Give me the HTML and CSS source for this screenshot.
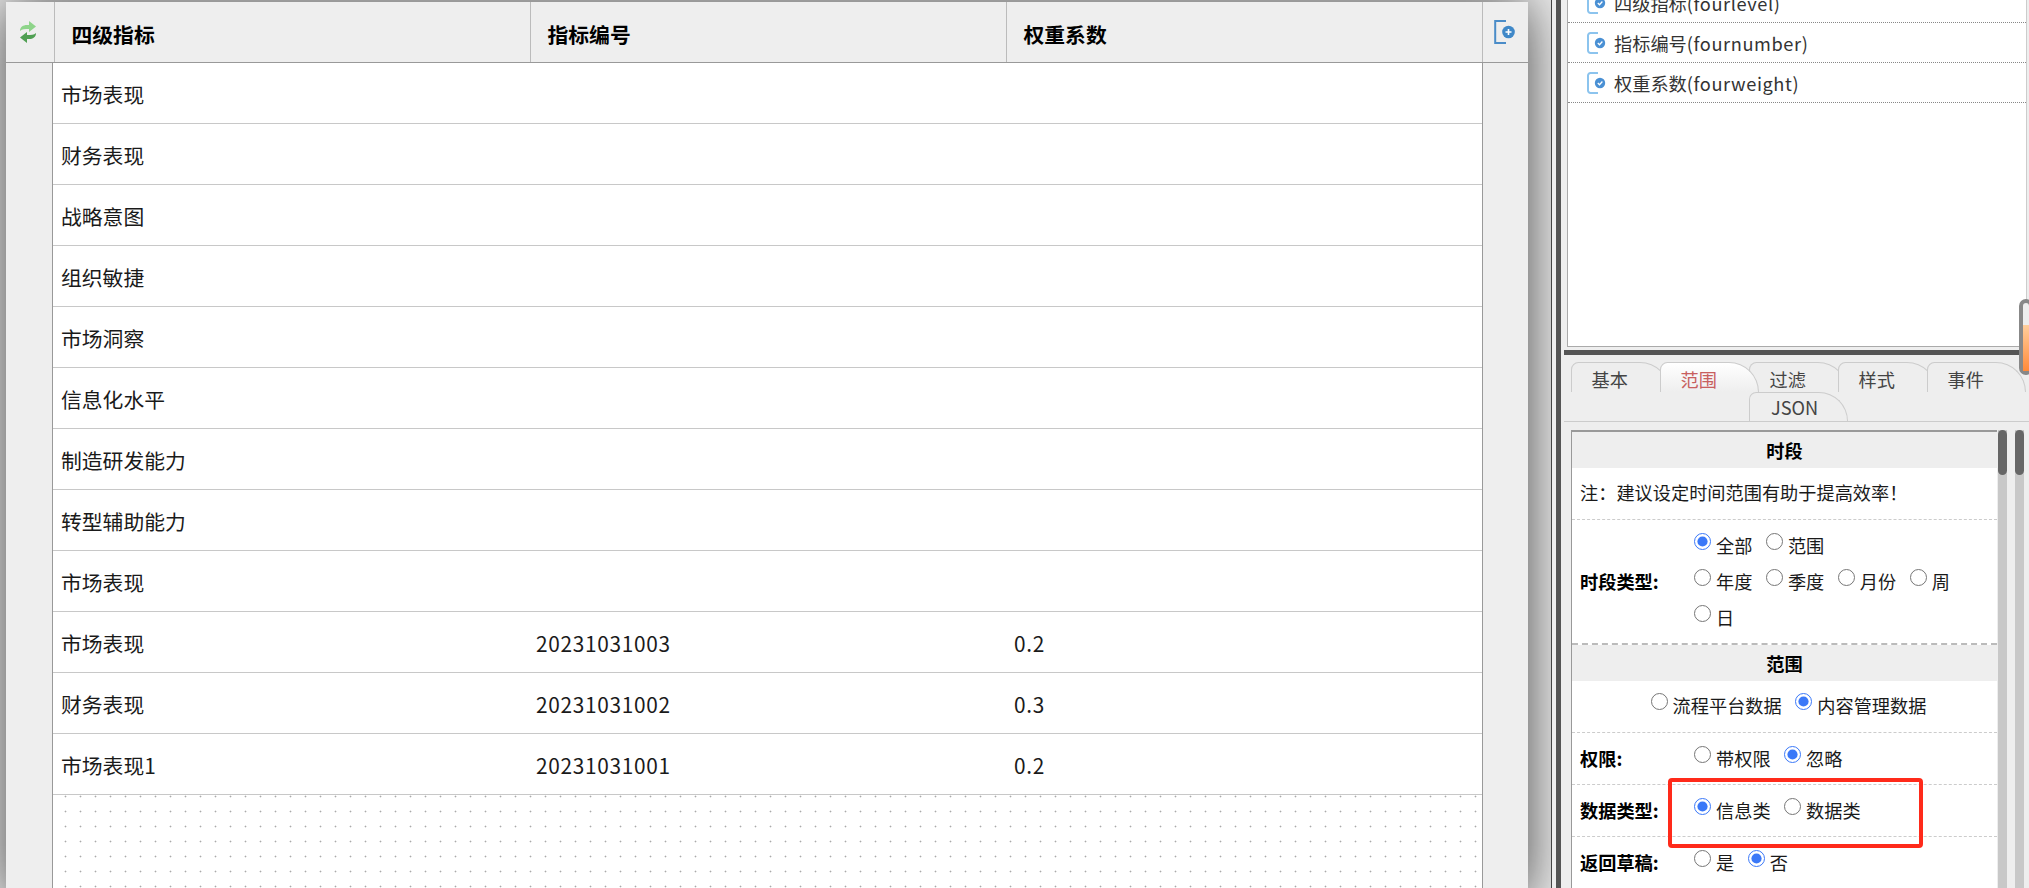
FILE: index.html
```html
<!DOCTYPE html>
<html lang="zh-CN">
<head>
<meta charset="utf-8">
<title>四级指标</title>
<link rel="stylesheet" href="styles.css">
</head>
<body>
<div class="page">
  <section class="stage">
    <div class="sheet">
      <div class="sheet-head">
        <div class="hcell">
          <svg class="ico-refresh" viewBox="0 0 18 22" width="18" height="22"><path d="M1 10C1 6 4 4 8 4h2V0l7 5.500-7 5.500V8C6 8 3 8 1 10Z" fill="#8ed48a"/><path d="M17 12c0 4-3 6-7 6H8v4l-7-5.500L8 11v3c4 0 7 0 9-2Z" fill="#4f9f52"/></svg>
        </div>
        <div class="hcell htext">四级指标</div>
        <div class="hcell htext">指标编号</div>
        <div class="hcell htext">权重系数</div>
        <div class="hcell hlast">
          <svg class="ico-add" viewBox="0 0 21 24" width="21" height="24"><path d="M12 1H1.200V23H12" fill="none" stroke="#4a8cc8" stroke-width="2"/><circle cx="14.500" cy="12" r="6.300" fill="#3f88c8"/><path d="M11.500 12h6M14.500 9v6" stroke="#fff" stroke-width="1.600"/></svg>
        </div>
      </div>
      <div class="sheet-body">
        <div class="gutter gutter-l"></div>
        <div class="rows">
          <div class="row"><span>市场表现</span><span></span><span></span></div>
          <div class="row"><span>财务表现</span><span></span><span></span></div>
          <div class="row"><span>战略意图</span><span></span><span></span></div>
          <div class="row"><span>组织敏捷</span><span></span><span></span></div>
          <div class="row"><span>市场洞察</span><span></span><span></span></div>
          <div class="row"><span>信息化水平</span><span></span><span></span></div>
          <div class="row"><span>制造研发能力</span><span></span><span></span></div>
          <div class="row"><span>转型辅助能力</span><span></span><span></span></div>
          <div class="row"><span>市场表现</span><span></span><span></span></div>
          <div class="row"><span>市场表现</span><span class="num">20231031003</span><span class="num">0.2</span></div>
          <div class="row"><span>财务表现</span><span class="num">20231031002</span><span class="num">0.3</span></div>
          <div class="row"><span>市场表现<span class="num">1</span></span><span class="num">20231031001</span><span class="num">0.2</span></div>
          <div class="dots"></div>
        </div>
        <div class="gutter gutter-r"></div>
      </div>
    </div>
  </section>

  <aside class="side">
    <div class="side-bar"></div>
    <div class="side-main">
      <div class="fields-wrap">
        <ul class="fields">
          <li class="field">
            <svg class="ico-field" viewBox="0 0 19 22" width="19" height="22"><path d="M11 1H3.500A2.500 2.500 0 0 0 1 3.500v15A2.500 2.500 0 0 0 3.500 21H11" fill="none" stroke="#8cc4ee" stroke-width="2"/><circle cx="13" cy="11" r="5.200" fill="#4a90d4"/><path d="M10.800 11l1.700 1.700 2.900-3.200" fill="none" stroke="#fff" stroke-width="1.300"/></svg>
            <span>四级指标<span class="lat">(fourlevel)</span></span>
          </li>
          <li class="field">
            <svg class="ico-field" viewBox="0 0 19 22" width="19" height="22"><path d="M11 1H3.500A2.500 2.500 0 0 0 1 3.500v15A2.500 2.500 0 0 0 3.500 21H11" fill="none" stroke="#8cc4ee" stroke-width="2"/><circle cx="13" cy="11" r="5.200" fill="#4a90d4"/><path d="M10.800 11l1.700 1.700 2.900-3.200" fill="none" stroke="#fff" stroke-width="1.300"/></svg>
            <span>指标编号<span class="lat">(fournumber)</span></span>
          </li>
          <li class="field">
            <svg class="ico-field" viewBox="0 0 19 22" width="19" height="22"><path d="M11 1H3.500A2.500 2.500 0 0 0 1 3.500v15A2.500 2.500 0 0 0 3.500 21H11" fill="none" stroke="#8cc4ee" stroke-width="2"/><circle cx="13" cy="11" r="5.200" fill="#4a90d4"/><path d="M10.800 11l1.700 1.700 2.900-3.200" fill="none" stroke="#fff" stroke-width="1.300"/></svg>
            <span>权重系数<span class="lat">(fourweight)</span></span>
          </li>
        </ul>
      </div>
      <div class="splitter"></div>
      <div class="slider"><div class="slider-fill"></div></div>

      <div class="tabs">
        <div class="tab-row">
          <div class="tab">基本</div>
          <div class="tab active">范围</div>
          <div class="tab">过滤</div>
          <div class="tab">样式</div>
          <div class="tab">事件</div>
        </div>
        <div class="tab-row tab-row-2">
          <div class="tab tab-json">JSON</div>
        </div>
      </div>

      <div class="form-area">
        <form class="form">
          <div class="form-head">时段</div>
          <div class="form-note">注：建议设定时间范围有助于提高效率！</div>
          <div class="form-row form-row-heavy">
            <div class="form-label">时段类型:</div>
            <div class="form-value">
              <div class="radio-line">
                <label class="radio"><input type="radio" name="period" checked>全部</label>
                <label class="radio"><input type="radio" name="period">范围</label>
              </div>
              <div class="radio-line">
                <label class="radio"><input type="radio" name="period">年度</label>
                <label class="radio"><input type="radio" name="period">季度</label>
                <label class="radio"><input type="radio" name="period">月份</label>
                <label class="radio"><input type="radio" name="period">周</label>
              </div>
              <div class="radio-line">
                <label class="radio"><input type="radio" name="period">日</label>
              </div>
            </div>
          </div>
          <div class="form-head">范围</div>
          <div class="form-center">
            <label class="radio"><input type="radio" name="source">流程平台数据</label>
            <label class="radio"><input type="radio" name="source" checked>内容管理数据</label>
          </div>
          <div class="form-row">
            <div class="form-label">权限:</div>
            <div class="form-value">
              <div class="radio-line">
                <label class="radio"><input type="radio" name="perm">带权限</label>
                <label class="radio"><input type="radio" name="perm" checked>忽略</label>
              </div>
            </div>
          </div>
          <div class="form-row">
            <div class="form-label">数据类型:</div>
            <div class="form-value">
              <div class="radio-line">
                <label class="radio"><input type="radio" name="kind" checked>信息类</label>
                <label class="radio"><input type="radio" name="kind">数据类</label>
              </div>
            </div>
          </div>
          <div class="form-row">
            <div class="form-label">返回草稿:</div>
            <div class="form-value">
              <div class="radio-line">
                <label class="radio"><input type="radio" name="draft">是</label>
                <label class="radio"><input type="radio" name="draft" checked>否</label>
              </div>
            </div>
          </div>
        </form>
        <div class="scroll"><div class="scroll-thumb"></div></div>
        <div class="scroll scroll-2"><div class="scroll-thumb"></div></div>
      </div>
    </div>
  </aside>
</div>
<div class="callout"></div>
</body>
</html>
```

FILE: styles.css
```css
* { box-sizing: border-box; }
html, body { margin: 0; padding: 0; height: 100%; overflow: hidden; }
body {
  background: #eee;
  color: #1a1a1a;
  font-family: "Noto Sans CJK SC", "Noto Sans", sans-serif;
}
.page { display: flex; width: 2029px; height: 888px; overflow: hidden; }

/* left sheet */
.stage {
  width: 1552px;
  height: 888px;
  padding: 2px 23px 0 6px;
  overflow: hidden;
  background: #eee;
  border-right: 1px solid #444;
  flex: none;
}
.sheet {
  width: 1522px;
  height: 900px;
  background: #eee;
  box-shadow: 0 0 54px rgba(0, 0, 0, .72);
  display: flex;
  flex-direction: column;
}
.sheet-head {
  display: grid;
  grid-template-columns: 49px 476px 476px 476px 45px;
  height: 61px;
  border-bottom: 1px solid #999;
  flex: none;
}
.hcell {
  border-right: 1px solid #bbb;
  display: flex;
  align-items: center;
  justify-content: center;
}
.htext {
  justify-content: flex-start;
  padding: 3px 0 0 16.500px;
  font-size: 20.8px;
  font-weight: 700;
  color: #000;
}
.hlast { border-right: 0; box-shadow: -1px 0 0 #bbb; }
.ico-refresh { margin: 0 5px 0 0; }
.ico-add { margin: 0 3px 0 0; }
.sheet-body { display: flex; flex: 1; min-height: 0; }
.gutter { flex: none; background: #eee; }
.gutter-l { width: 47px; border-right: 1px solid #999; }
.gutter-r { width: 46px; border-left: 1px solid #999; }
.rows { flex: 1; display: flex; flex-direction: column; background: #fff; min-width: 0; }
.row {
  display: grid;
  grid-template-columns: 475px 478px 1fr;
  height: 61px;
  flex: none;
  align-items: center;
  padding-top: 1px;
  border-bottom: 1px solid #c8c8c8;
  font-size: 20.8px;
}
.row > span { padding-left: 8px; }
.num { letter-spacing: .72px; }
.row > span > .num { letter-spacing: 0; }
.dots {
  flex: 1;
  background-color: #fff;
  background-image: radial-gradient(circle, #aaa .8px, transparent 1.1px);
  background-size: 15px 15px;
  background-position: 5px -6px;
}

/* right side */
.side { flex: 1; display: flex; min-width: 0; background: #eee; }
.side-bar { width: 9px; flex: none; border-left: 4px solid #eee; background: #555; }
.side-main { flex: 1; position: relative; display: flex; flex-direction: column; min-width: 0; }
.fields-wrap {
  margin: 0 2px 0 6px;
  height: 347px;
  flex: none;
  background: #fff;
  border: 1px solid #aaa;
  border-width: 0 1px 1px 1px;
  border-right-color: #ccc;
  overflow: hidden;
}
.fields { list-style: none; margin: -17px 0 0; padding: 0; }
.field {
  display: flex;
  align-items: center;
  gap: 8px;
  height: 40px;
  padding-left: 19px;
  border-bottom: 1px dotted #888;
  font-size: 18.2px;
  color: #333;
}
.ico-field { flex: none; }
.lat { letter-spacing: .6px; }
.splitter { height: 5px; margin: 3px 0 0 3px; background: #555; flex: none; }
.slider {
  position: absolute;
  left: 458px;
  top: 299px;
  width: 14px;
  height: 76px;
  border: 4px solid #888;
  border-radius: 8px;
  background: #eee;
}
.slider-fill {
  margin-top: 22px;
  height: 46px;
  background: linear-gradient(#ffce9c, #ff8a3a);
}
.tabs {
  margin: 7px 0 0 3px;
  height: 60px;
  border-bottom: 1px solid #ccc;
  flex: none;
}
.tab-row { display: flex; padding-left: 7px; height: 30px; }
.tab-row-2 { padding-left: 185px; height: 29px; }
.tab {
  width: 99px;
  margin-right: -10px;
  padding-left: 19.500px;
  border: 1px solid #ccc;
  border-bottom: 0;
  border-radius: 8px 32px 0 0;
  background: #eee;
  color: #444;
  font-size: 18.2px;
  line-height: 33px;
  position: relative;
}
.tab-row-2 .tab { line-height: 29px; }
.tab-json { padding-left: 21px; }
.tab.active {
  z-index: 1;
  color: #c8605f;
  background: linear-gradient(#fff, #eee);
}
.form-area { flex: 1; display: flex; margin-top: 8px; padding-left: 10px; min-height: 0; }
.form {
  width: 426px;
  height: 520px;
  flex: none;
  background: #fff;
  border: 1px solid #999;
  border-width: 2px 0 0 1px;
  font-size: 18.2px;
}
.form-head {
  height: 36px;
  background: #eee;
  color: #000;
  font-weight: 700;
  text-align: center;
  line-height: 36px;
}
.form-note {
  height: 52px;
  padding-left: 8px;
  line-height: 49px;
  border-bottom: 1px dashed #ccc;
}
.form-row {
  display: flex;
  align-items: center;
  padding: 4px 0 11px;
  border-bottom: 1px dashed #ccc;
}
.form-row-heavy { border-bottom: 2px dashed #bbb; }
.form-label { width: 122px; padding: 5px 0 0 8px; font-weight: 700; color: #000; flex: none; }
.form-value { min-width: 0; }
.radio-line { display: flex; gap: 13.500px; height: 36px; }
.radio {
  display: inline-flex;
  align-items: flex-start;
  line-height: 36px;
  padding-top: 3px;
}
.radio input {
  width: 17px;
  height: 17px;
  margin: 6px 5px 0 0;
  accent-color: #3a78f8;
  flex: none;
}
.form-center {
  display: flex;
  justify-content: center;
  gap: 13.500px;
  height: 52px;
  padding: 3px 0 0 8px;
  border-bottom: 1px dashed #ccc;
}
.scroll { width: 9px; margin-left: 1px; background: #c8c8c8; height: 458px; flex: none; }
.scroll-2 { margin-left: 8px; }
.scroll-thumb { height: 45px; background: #666; border-radius: 5px; }

.callout {
  position: absolute;
  left: 1668px;
  top: 778px;
  width: 255px;
  height: 70px;
  border: 4.500px solid #ff2a1a;
  border-radius: 4px;
}
```
